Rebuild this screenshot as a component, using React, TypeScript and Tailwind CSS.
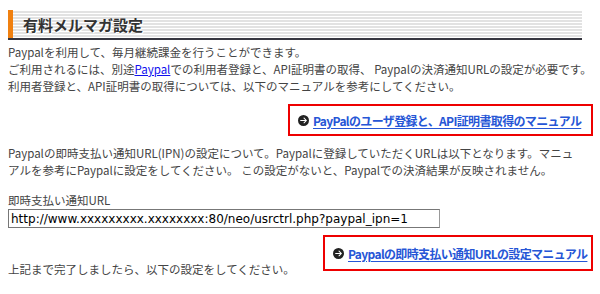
import { FaCircleArrowRight } from "react-icons/fa6";

const font = '"Noto Sans CJK JP", "Liberation Sans", sans-serif';

function ManualLink({ children }: { children: React.ReactNode }) {
  return (
    <a href="#" className="flex items-center gap-[4px] font-bold text-[#2656d6] underline underline-offset-2 text-[12px] whitespace-nowrap tracking-[-0.65px]">
      <FaCircleArrowRight className="w-[11px] h-[11px] shrink-0 text-[#222]" />
      <span>{children}</span>
    </a>
  );
}

export default function App() {
  return (
    <div
      className="w-[600px] h-[294px] bg-white pl-2 pt-[10px] text-[#444] text-[11.5px] leading-[17px] overflow-hidden"
      style={{ fontFamily: font }}
    >
      <div className="w-[574px] h-[30px] flex border-b-2 border-[#35353f] bg-[repeating-linear-gradient(to_bottom,#ffffff_0px,#ffffff_1px,#e2e2e2_1px,#e2e2e2_3px)]">
        <div className="w-[5px] bg-[#f08010]" />
        <h1 className="pl-[10px] flex items-center text-[15px] font-bold text-[#333] [text-shadow:1px_1px_0_#fff]">
          有料メルマガ設定
        </h1>
      </div>

      <div className="pt-[4px]">
        <p>Paypalを利用して、毎月継続課金を行うことができます。</p>
        <p>
          ご利用されるには、別途<a href="#" className="text-[#1010ee] underline">Paypal</a>での利用者登録と、API証明書の取得、 Paypalの決済通知URLの設定が必要です。
        </p>
        <p>利用者登録と、API証明書の取得については、以下のマニュアルを参考にしてください。</p>
      </div>

      <div className="flex justify-end pr-[7px] mt-[9px]">
        <div className="w-[305px] h-[32px] border-2 border-[#ee0000] flex items-center pl-[8px]">
          <ManualLink>PayPalのユーザ登録と、API証明書取得のマニュアル</ManualLink>
        </div>
      </div>

      <div className="mt-[9px]">
        <p>Paypalの即時支払い通知URL(IPN)の設定について。Paypalに登録していただくURLは以下となります。マニュ</p>
        <p>アルを参考にPaypalに設定をしてください。 この設定がないと、Paypalでの決済結果が反映されません。</p>
      </div>

      <div className="mt-[13px]">
        <p>即時支払い通知URL</p>
        <input
          readOnly
          value="http://www.xxxxxxxxx.xxxxxxxx:80/neo/usrctrl.php?paypal_ipn=1"
          className="w-[432px] h-[19px] border border-[#777] border-r-[#999] px-[2px] text-black outline-none"
          style={{ fontFamily: '"DejaVu Sans", sans-serif', fontSize: '12px' }}
        />
      </div>

      <div className="flex justify-end pr-[7px] mt-[7px]">
        <div className="w-[270px] h-[36px] border-2 border-[#ee0000] flex items-center pl-[8px]">
          <ManualLink>Paypalの即時支払い通知URLの設定マニュアル</ManualLink>
        </div>
      </div>

      <p className="-mt-[10px]">上記まで完了しましたら、以下の設定をしてください。</p>
    </div>
  );
}
